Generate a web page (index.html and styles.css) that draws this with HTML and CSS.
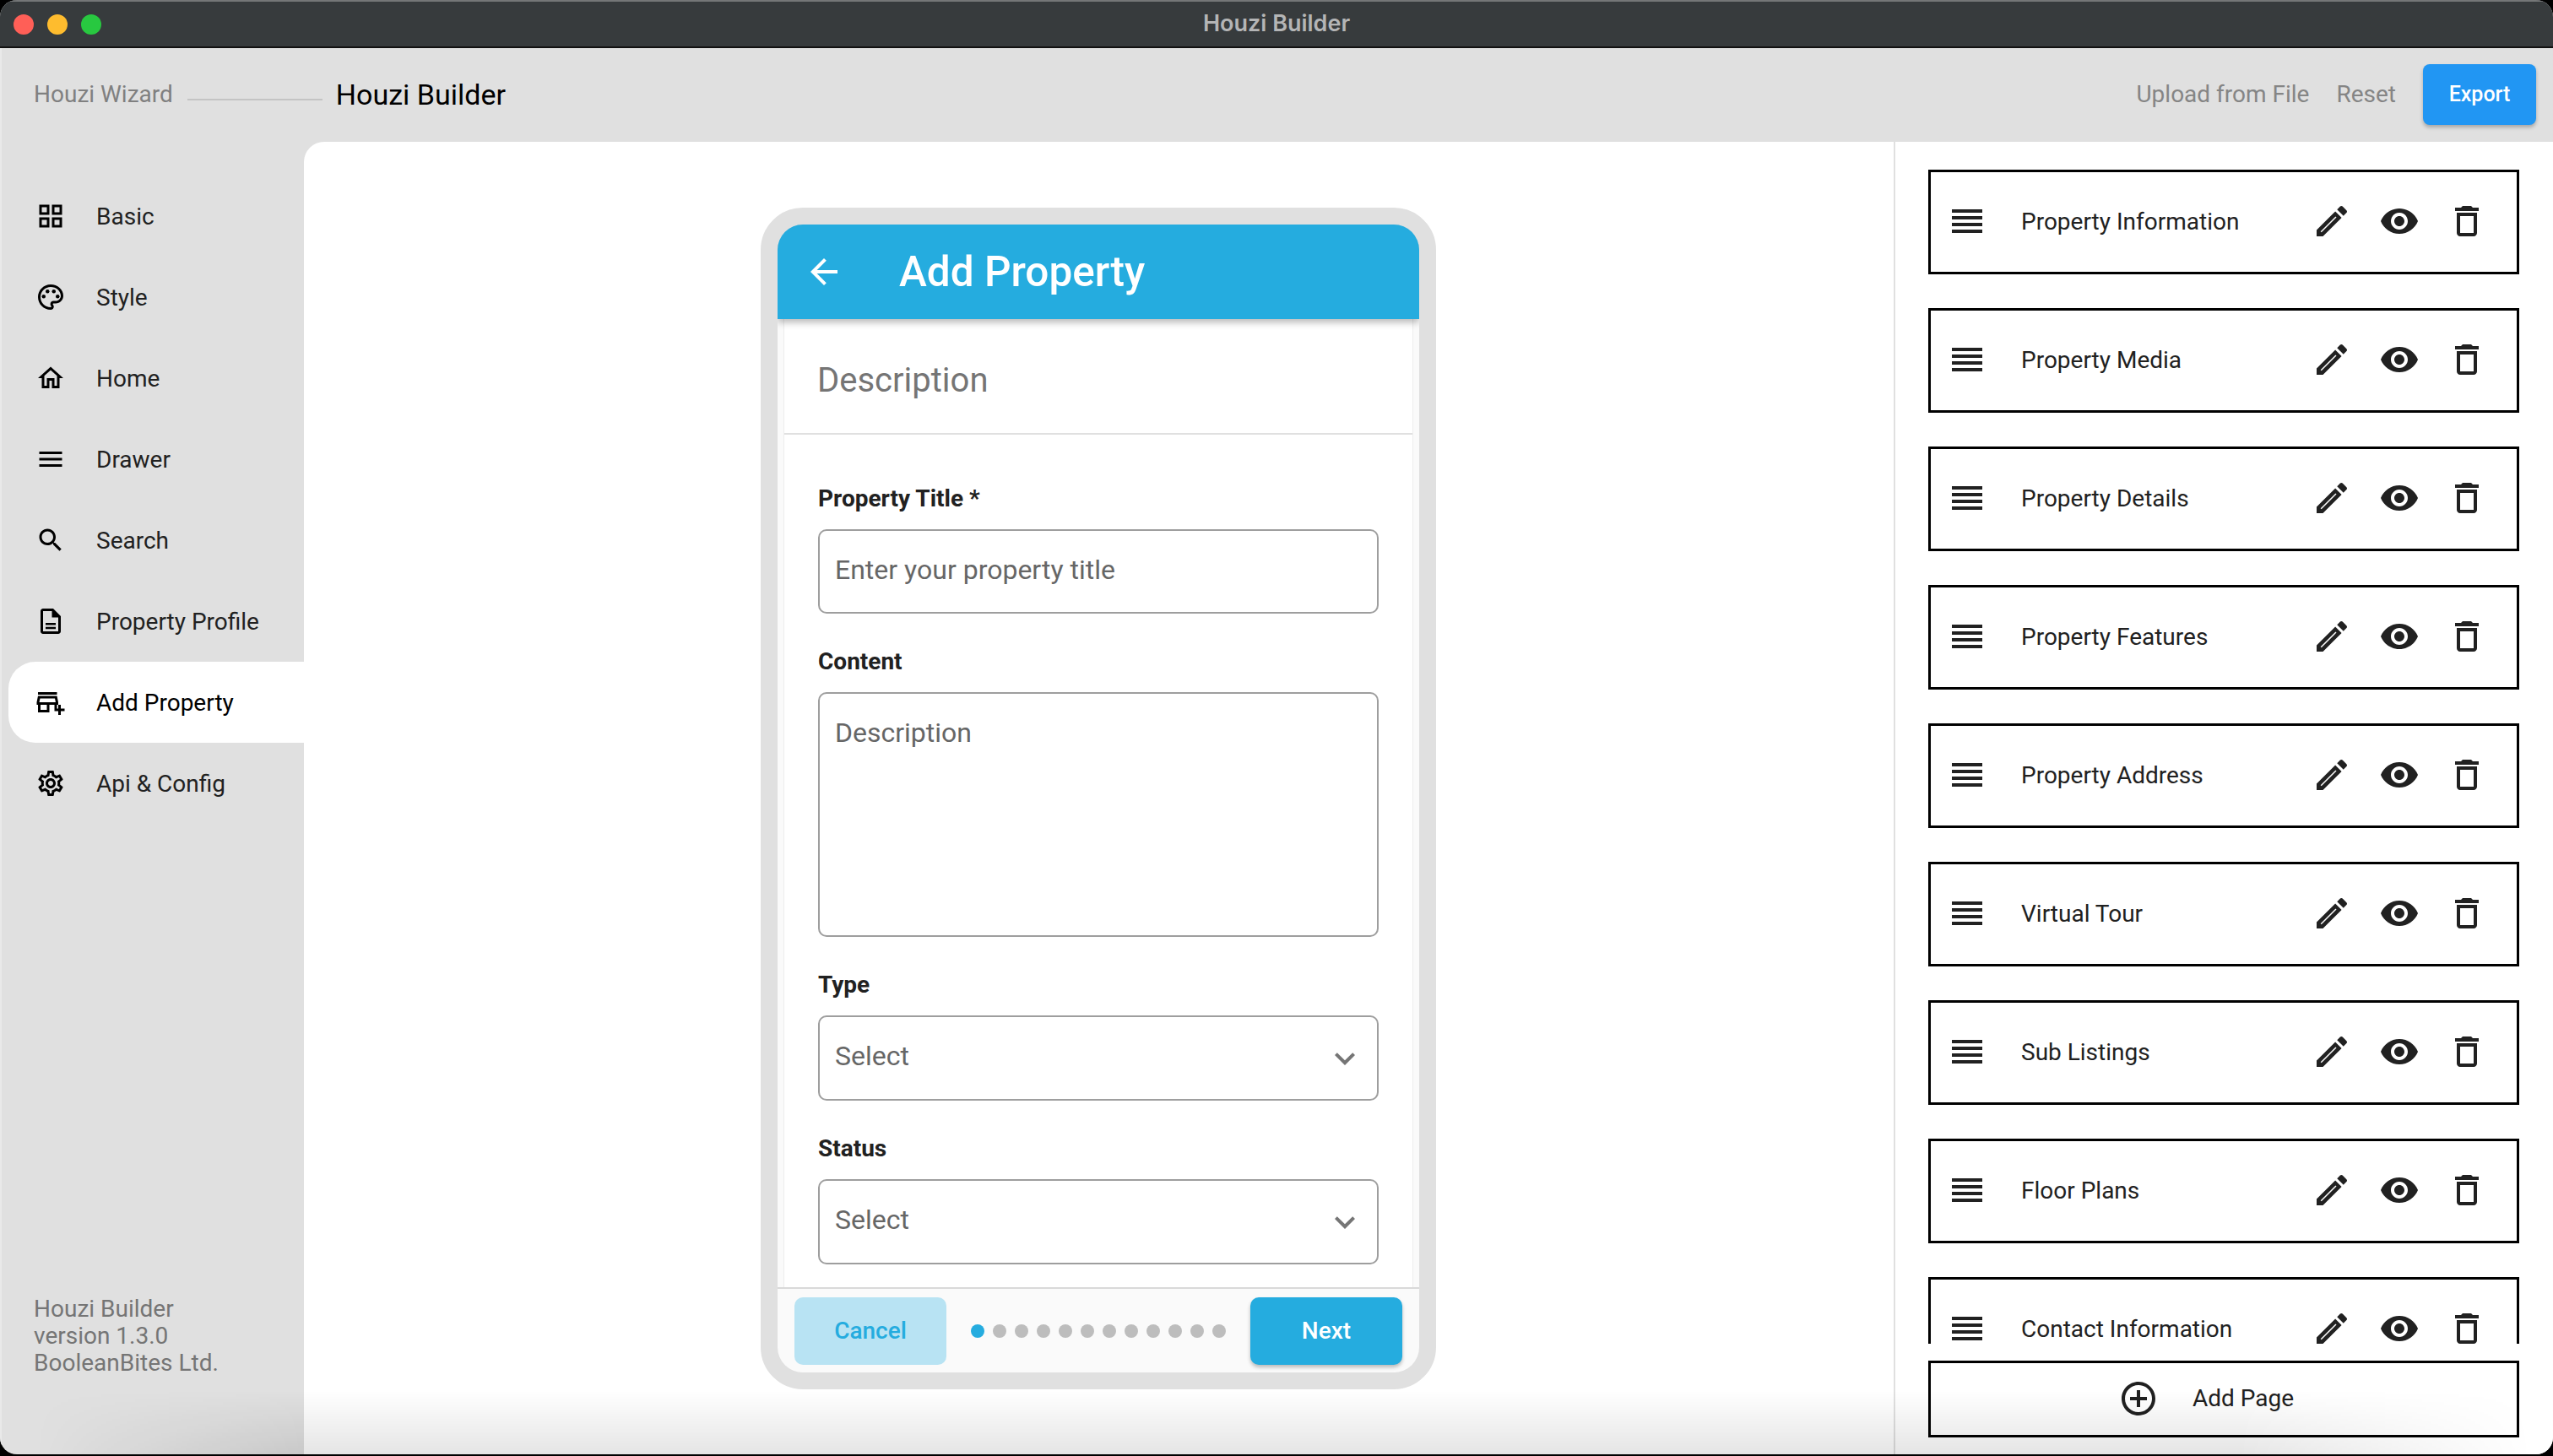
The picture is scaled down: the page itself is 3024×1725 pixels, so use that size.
FILE: index.html

```html
<!DOCTYPE html>
<html lang="en">
<head>
  <meta charset="UTF-8" />
  <title>Houzi Builder</title>
  <link rel="stylesheet" href="styles.css">
</head>
<body>
  <svg class="defs" width="0" height="0">
    <symbol id="i-grid" viewBox="0 0 24 24"><path d="M3 3v8h8V3H3zm6 6H5V5h4v4zm-6 4v8h8v-8H3zm6 6H5v-4h4v4zm4-16v8h8V3h-8zm6 6h-4V5h4v4zm-6 4v8h8v-8h-8zm6 6h-4v-4h4v4z"/></symbol>
    <symbol id="i-palette" viewBox="0 0 24 24"><path d="M12 22C6.49 22 2 17.51 2 12S6.49 2 12 2s10 4.04 10 9c0 3.31-2.69 6-6 6h-1.77c-.28 0-.5.22-.5.5 0 .12.05.23.13.33.41.47.64 1.06.64 1.67 0 1.38-1.12 2.5-2.5 2.5zm0-18c-4.41 0-8 3.59-8 8s3.59 8 8 8c.28 0 .5-.22.5-.5 0-.16-.08-.28-.14-.35-.41-.46-.63-1.05-.63-1.65 0-1.38 1.12-2.5 2.5-2.5H16c2.21 0 4-1.79 4-4 0-3.86-3.59-7-8-7z"/><circle cx="6.5" cy="11.5" r="1.5"/><circle cx="9.5" cy="7.5" r="1.5"/><circle cx="14.5" cy="7.5" r="1.5"/><circle cx="17.5" cy="11.5" r="1.5"/></symbol>
    <symbol id="i-home" viewBox="0 0 24 24"><path d="M12 5.69l5 4.5V18h-2v-6H9v6H7v-7.81l5-4.5M12 3L2 12h3v8h6v-6h2v6h6v-8h3L12 3z"/></symbol>
    <symbol id="i-menu" viewBox="0 0 24 24"><path d="M3 18h18v-2H3v2zm0-5h18v-2H3v2zm0-7v2h18V6H3z"/></symbol>
    <symbol id="i-search" viewBox="0 0 24 24"><path d="M15.5 14h-.79l-.28-.27C15.41 12.59 16 11.11 16 9.5 16 5.91 13.09 3 9.5 3S3 5.91 3 9.5 5.91 16 9.5 16c1.61 0 3.09-.59 4.23-1.57l.27.28v.79l5 4.99L20.49 19l-4.99-5zm-6 0C7.01 14 5 11.99 5 9.5S7.01 5 9.5 5 14 7.01 14 9.5 11.99 14 9.5 14z"/></symbol>
    <symbol id="i-doc" viewBox="0 0 24 24"><path d="M8 13.3h8v1.7H8zm0 3.2h8v1.7H8zM14 2H6c-1.1 0-2 .9-2 2v16c0 1.1.89 2 1.99 2H18c1.1 0 2-.9 2-2V8l-6-6zm4 18H6V4h7v5h5v11z"/></symbol>
    <symbol id="i-store" viewBox="0 0 24 24"><path d="M2 4h15v2H2zM15 17h2v-3h1v-2l-1-5H2l-1 5v2h1v6h9v-6h4v3zm-6 1H4v-4h5v4zm-5.96-6l.6-3h11.72l.6 3H3.04zM20 17v-3h-2v3h-3v2h3v3h2v-3h3v-2z"/></symbol>
    <symbol id="i-gear" viewBox="0 0 24 24"><path d="M19.43 12.98c.04-.32.07-.64.07-.98 0-.34-.03-.66-.07-.98l2.11-1.65c.19-.15.24-.42.12-.64l-2-3.46c-.09-.16-.26-.25-.44-.25-.06 0-.12.01-.17.03l-2.49 1c-.52-.4-1.08-.73-1.69-.98l-.38-2.65C14.46 2.18 14.25 2 14 2h-4c-.25 0-.46.18-.49.42l-.38 2.65c-.61.25-1.17.59-1.69.98l-2.49-1c-.06-.02-.12-.03-.18-.03-.17 0-.34.09-.43.25l-2 3.46c-.13.22-.07.49.12.64l2.11 1.65c-.04.32-.07.65-.07.98 0 .33.03.66.07.98l-2.11 1.65c-.19.15-.24.42-.12.64l2 3.46c.09.16.26.25.44.25.06 0 .12-.01.17-.03l2.49-1c.52.4 1.08.73 1.69.98l.38 2.65c.03.24.24.42.49.42h4c.25 0 .46-.18.49-.42l.38-2.65c.61-.25 1.17-.59 1.69-.98l2.49 1c.06.02.12.03.18.03.17 0 .34-.09.43-.25l2-3.46c.12-.22.07-.49-.12-.64l-2.11-1.65zm-1.98-1.71c.04.31.05.52.05.73 0 .21-.02.43-.05.73l-.14 1.13.89.7 1.08.84-.7 1.21-1.27-.51-1.04-.42-.9.68c-.43.32-.84.56-1.25.73l-1.06.43-.16 1.13-.2 1.35h-1.4l-.19-1.35-.16-1.13-1.06-.43c-.43-.18-.83-.41-1.23-.71l-.91-.7-1.06.43-1.27.51-.7-1.21 1.08-.84.89-.7-.14-1.13c-.03-.31-.05-.54-.05-.74s.02-.43.05-.73l.14-1.13-.89-.7-1.08-.84.7-1.21 1.27.51 1.04.42.9-.68c.43-.32.84-.56 1.25-.73l1.06-.43.16-1.13.2-1.35h1.39l.19 1.35.16 1.13 1.06.43c.43.18.83.41 1.23.71l.91.7 1.06-.43 1.27-.51.7 1.21-1.07.85-.89.7.14 1.13zM12 8c-2.21 0-4 1.79-4 4s1.79 4 4 4 4-1.79 4-4-1.79-4-4-4zm0 6c-1.1 0-2-.9-2-2s.9-2 2-2 2 .9 2 2-.9 2-2 2z"/></symbol>
    <symbol id="i-back" viewBox="0 0 24 24"><path d="M20 11H7.83l5.59-5.59L12 4l-8 8 8 8 1.41-1.41L7.83 13H20v-2z"/></symbol>
    <symbol id="i-chevron" viewBox="0 0 24 24"><path d="M16.59 8.59L12 13.17 7.41 8.59 6 10l6 6 6-6z"/></symbol>
    <symbol id="i-reorder" viewBox="0 0 24 24"><path d="M3 15h18v-2H3v2zm0 4h18v-2H3v2zm0-8h18V9H3v2zm0-6v2h18V5H3z"/></symbol>
    <symbol id="i-edit" viewBox="0 0 24 24"><path d="M3 17.25V21h3.75L17.81 9.94l-3.75-3.75L3 17.25zM20.71 7.04c.39-.39.39-1.02 0-1.41l-2.34-2.34c-.39-.39-1.02-.39-1.41 0l-1.83 1.83 3.75 3.75 1.83-1.83z"/><path class="slit" d="M5.6 18.4l8.9-8.9"/></symbol>
    <symbol id="i-eye" viewBox="0 0 24 24"><path d="M12 4.5C7 4.5 2.73 7.61 1 12c1.73 4.39 6 7.5 11 7.5s9.27-3.11 11-7.5c-1.73-4.39-6-7.5-11-7.5zM12 17c-2.76 0-5-2.24-5-5s2.24-5 5-5 5 2.24 5 5-2.24 5-5 5zm0-8c-1.66 0-3 1.34-3 3s1.34 3 3 3 3-1.34 3-3-1.34-3-3-3z"/></symbol>
    <symbol id="i-trash" viewBox="0 0 24 24"><path d="M16 9v10H8V9h8m-1.5-6h-5l-1 1H5v2h14V4h-3.5l-1-1zM18 7H6v12c0 1.1.9 2 2 2h8c1.1 0 2-.9 2-2V7z"/></symbol>
    <symbol id="i-add" viewBox="0 0 24 24"><path d="M13 7h-2v4H7v2h4v4h2v-4h4v-2h-4V7zm-1-5C6.48 2 2 6.48 2 12s4.48 10 10 10 10-4.48 10-10S17.52 2 12 2zm0 18c-4.41 0-8-3.59-8-8s3.59-8 8-8 8 3.59 8 8-3.59 8-8 8z"/></symbol>
  </svg>

  <div class="window">
    <div class="titlebar">
      <div class="lights">
        <span class="light red"></span>
        <span class="light yellow"></span>
        <span class="light green"></span>
      </div>
      <div class="window-title">Houzi Builder</div>
    </div>

    <header class="topbar">
      <span class="step">Houzi Wizard</span>
      <span class="step-line"></span>
      <span class="step-current">Houzi Builder</span>
      <div class="top-actions">
        <span class="top-link">Upload from File</span>
        <span class="top-link">Reset</span>
        <button class="export">Export</button>
      </div>
    </header>

    <div class="main">
      <aside class="sidebar">
        <nav class="nav">
          <div class="nav-item"><svg class="nav-icon"><use href="#i-grid"/></svg>Basic</div>
          <div class="nav-item"><svg class="nav-icon"><use href="#i-palette"/></svg>Style</div>
          <div class="nav-item"><svg class="nav-icon"><use href="#i-home"/></svg>Home</div>
          <div class="nav-item"><svg class="nav-icon"><use href="#i-menu"/></svg>Drawer</div>
          <div class="nav-item"><svg class="nav-icon"><use href="#i-search"/></svg>Search</div>
          <div class="nav-item"><svg class="nav-icon"><use href="#i-doc"/></svg>Property Profile</div>
          <div class="nav-item active"><svg class="nav-icon"><use href="#i-store"/></svg>Add Property</div>
          <div class="nav-item"><svg class="nav-icon"><use href="#i-gear"/></svg>Api &amp; Config</div>
        </nav>
        <div class="version">Houzi Builder<br>version 1.3.0<br>BooleanBites Ltd.</div>
      </aside>

      <section class="preview">
        <div class="phone">
          <div class="appbar">
            <svg class="back"><use href="#i-back"/></svg>
            <span class="appbar-title">Add Property</span>
          </div>
          <div class="phone-body">
            <div class="phone-page">
              <div class="page-heading">Description</div>
              <div class="form">
                <div class="field">
                  <div class="field-label">Property Title *</div>
                  <div class="input">Enter your property title</div>
                </div>
                <div class="field">
                  <div class="field-label">Content</div>
                  <div class="input textarea">Description</div>
                </div>
                <div class="field">
                  <div class="field-label">Type</div>
                  <div class="input select">Select<svg class="chevron"><use href="#i-chevron"/></svg></div>
                </div>
                <div class="field">
                  <div class="field-label">Status</div>
                  <div class="input select">Select<svg class="chevron"><use href="#i-chevron"/></svg></div>
                </div>
              </div>
            </div>
          </div>
          <div class="phone-footer">
            <button class="btn cancel">Cancel</button>
            <div class="dots">
              <span class="dot on"></span><span class="dot"></span><span class="dot"></span><span class="dot"></span>
              <span class="dot"></span><span class="dot"></span><span class="dot"></span><span class="dot"></span>
              <span class="dot"></span><span class="dot"></span><span class="dot"></span><span class="dot"></span>
            </div>
            <button class="btn next">Next</button>
          </div>
        </div>
      </section>

      <aside class="pages">
        <div class="page-list">
          <div class="page-card"><svg class="tool grip"><use href="#i-reorder"/></svg><span class="page-name">Property Information</span><svg class="tool"><use href="#i-edit"/></svg><svg class="tool"><use href="#i-eye"/></svg><svg class="tool"><use href="#i-trash"/></svg></div>
          <div class="page-card"><svg class="tool grip"><use href="#i-reorder"/></svg><span class="page-name">Property Media</span><svg class="tool"><use href="#i-edit"/></svg><svg class="tool"><use href="#i-eye"/></svg><svg class="tool"><use href="#i-trash"/></svg></div>
          <div class="page-card"><svg class="tool grip"><use href="#i-reorder"/></svg><span class="page-name">Property Details</span><svg class="tool"><use href="#i-edit"/></svg><svg class="tool"><use href="#i-eye"/></svg><svg class="tool"><use href="#i-trash"/></svg></div>
          <div class="page-card"><svg class="tool grip"><use href="#i-reorder"/></svg><span class="page-name">Property Features</span><svg class="tool"><use href="#i-edit"/></svg><svg class="tool"><use href="#i-eye"/></svg><svg class="tool"><use href="#i-trash"/></svg></div>
          <div class="page-card"><svg class="tool grip"><use href="#i-reorder"/></svg><span class="page-name">Property Address</span><svg class="tool"><use href="#i-edit"/></svg><svg class="tool"><use href="#i-eye"/></svg><svg class="tool"><use href="#i-trash"/></svg></div>
          <div class="page-card"><svg class="tool grip"><use href="#i-reorder"/></svg><span class="page-name">Virtual Tour</span><svg class="tool"><use href="#i-edit"/></svg><svg class="tool"><use href="#i-eye"/></svg><svg class="tool"><use href="#i-trash"/></svg></div>
          <div class="page-card"><svg class="tool grip"><use href="#i-reorder"/></svg><span class="page-name">Sub Listings</span><svg class="tool"><use href="#i-edit"/></svg><svg class="tool"><use href="#i-eye"/></svg><svg class="tool"><use href="#i-trash"/></svg></div>
          <div class="page-card"><svg class="tool grip"><use href="#i-reorder"/></svg><span class="page-name">Floor Plans</span><svg class="tool"><use href="#i-edit"/></svg><svg class="tool"><use href="#i-eye"/></svg><svg class="tool"><use href="#i-trash"/></svg></div>
          <div class="page-card"><svg class="tool grip"><use href="#i-reorder"/></svg><span class="page-name">Contact Information</span><svg class="tool"><use href="#i-edit"/></svg><svg class="tool"><use href="#i-eye"/></svg><svg class="tool"><use href="#i-trash"/></svg></div>
        </div>
        <div class="add-page"><svg class="tool"><use href="#i-add"/></svg><span>Add Page</span></div>
      </aside>
    </div>

    <div class="bottom-shade"></div>
  </div>
</body>
</html>
```

FILE: styles.css

```css
* {
  box-sizing: border-box;
}
html, body {
  margin: 0;
  height: 100%;
  background: #000;
}
body {
  font-family: Roboto, "Liberation Sans", sans-serif;
  overflow: hidden;
}
.defs {
  display: block;
  height: 0;
}
.slit {
  fill: none;
  stroke: #fff;
  stroke-width: 0.75;
}

.window {
  position: relative;
  display: flex;
  flex-direction: column;
  height: 1723px;
  background: #e0e0e0;
  border-radius: 20px;
  overflow: hidden;
}

/* mac title bar */
.titlebar {
  display: grid;
  grid-template-columns: 1fr auto 1fr;
  align-items: center;
  height: 57px;
  background: #373b3d;
  border-top: 2px solid #747677;
  border-bottom: 2px solid #111;
}
.lights {
  display: flex;
  gap: 16px;
  padding-left: 16px;
}
.light {
  width: 24px;
  height: 24px;
  border-radius: 50%;
}
.red { background: #ff5f57; }
.yellow { background: #febc2e; }
.green { background: #28c840; }
.window-title {
  margin-bottom: 2px;
  font-family: Inter, sans-serif;
  font-weight: 600;
  font-size: 27px;
  color: #b4b5b6;
}

/* top bar */
.topbar {
  display: flex;
  align-items: center;
  height: 111px;
  padding: 0 20px 2px 40px;
  box-shadow: inset 2px 0 0 #e9e9e9;
}
.step {
  font-size: 28px;
  color: #808080;
}
.step-line {
  width: 160px;
  height: 2px;
  margin: 12px 16px 0 17px;
  background: #c4c4c4;
}
.step-current {
  font-size: 34px;
  color: #000;
}
.top-actions {
  display: flex;
  align-items: center;
  margin-left: auto;
}
.top-link {
  margin-right: 32px;
  font-size: 28px;
  color: #858585;
}
.export {
  width: 134px;
  height: 72px;
  border: 0;
  border-radius: 8px;
  background: #2196f3;
  color: #fff;
  font-family: inherit;
  font-size: 25px;
  font-weight: 500;
  box-shadow: 0 3px 4px rgba(0, 0, 0, 0.25);
}

.main {
  display: flex;
  flex: 1;
  min-height: 0;
}

/* left nav */
.sidebar {
  display: flex;
  flex-direction: column;
  flex: 0 0 360px;
  box-shadow: inset 2px 0 0 #e9e9e9;
}
.nav {
  padding: 40px 0 0 10px;
}
.nav-item {
  display: flex;
  align-items: center;
  gap: 36px;
  height: 96px;
  padding-left: 32px;
  font-size: 28px;
  color: #212121;
  border-radius: 32px 0 0 32px;
}
.nav-item.active {
  background: #fff;
  color: #000;
}
.nav-icon {
  flex: none;
  width: 36px;
  height: 36px;
}
.version {
  margin-top: auto;
  padding: 0 0 92px 40px;
  font-size: 28px;
  line-height: 32px;
  color: #757575;
}

/* phone preview */
.preview {
  display: flex;
  justify-content: center;
  flex: 1;
  padding: 78px 1px 0 0;
  background: #fff;
  border-radius: 24px 0 0 0;
}
.phone {
  display: flex;
  flex-direction: column;
  width: 800px;
  height: 1400px;
  border: 20px solid #e0e0e0;
  border-radius: 50px;
  overflow: hidden;
  background: #e0e0e0;
}
.appbar {
  position: relative;
  z-index: 1;
  display: flex;
  align-items: center;
  flex: 0 0 112px;
  padding-left: 31px;
  background: #25acdf;
  border-radius: 24px 24px 0 0;
  box-shadow: 0 4px 8px rgba(0, 0, 0, 0.28);
}
.back {
  width: 48px;
  height: 48px;
  fill: #fff;
}
.appbar-title {
  margin-left: 65px;
  font-size: 49.5px;
  font-weight: 500;
  color: #fff;
}
.phone-body {
  flex: 1;
  min-height: 0;
  padding: 0 7px;
  background: #fafafa;
  overflow: hidden;
}
.phone-page {
  height: 100%;
  background: #fff;
  border-left: 1px solid #eee;
  border-right: 1px solid #eee;
}
.page-heading {
  height: 137px;
  padding: 50px 0 0 39px;
  font-size: 40px;
  line-height: 46px;
  color: #757575;
  border-bottom: 2px solid #e0e0e0;
}
.form {
  padding: 57px 40px 0 40px;
}
.field {
  margin-bottom: 38px;
}
.field-label {
  height: 36px;
  margin-bottom: 19px;
  font-size: 28px;
  font-weight: 700;
  line-height: 38px;
  color: #212121;
}
.input {
  position: relative;
  height: 100px;
  padding: 26px 18px 0 18px;
  font-size: 32px;
  line-height: 40px;
  color: #666;
  border: 2px solid #9e9e9e;
  border-radius: 10px;
}
.textarea {
  height: 290px;
}
.select {
  height: 101px;
}
.chevron {
  position: absolute;
  top: 25px;
  right: 14px;
  width: 48px;
  height: 48px;
  fill: #757575;
}
.phone-footer {
  display: flex;
  align-items: center;
  justify-content: space-between;
  flex: 0 0 101px;
  padding: 0 20px;
  background: #fafafa;
  border-top: 2px solid #d9d9d9;
  border-radius: 0 0 24px 24px;
}
.btn {
  width: 180px;
  height: 80px;
  border: 0;
  border-radius: 10px;
  font-family: inherit;
  font-size: 28px;
  font-weight: 500;
}
.cancel {
  background: #b8e3f3;
  color: #25acdf;
}
.next {
  background: #25acdf;
  color: #fff;
  box-shadow: 0 3px 4px rgba(0, 0, 0, 0.25);
}
.dots {
  display: flex;
  gap: 10px;
}
.dot {
  width: 16px;
  height: 16px;
  border-radius: 50%;
  background: #bdbdbd;
}
.dot.on {
  background: #25acdf;
}

/* page list */
.pages {
  display: flex;
  flex-direction: column;
  flex: 0 0 781px;
  padding: 0 40px 20px 39px;
  background: #fff;
  border-left: 2px solid #e0e0e0;
}
.page-list {
  display: flex;
  flex-direction: column;
  gap: 40px;
  flex: 1;
  min-height: 0;
  padding-top: 33px;
  overflow: hidden;
}
.page-card {
  display: flex;
  align-items: center;
  gap: 32px;
  flex: 0 0 124px;
  padding: 0 35px 2px 19px;
  border: 3px solid #000;
}
.page-name {
  flex: 1;
  margin-left: 8px;
  font-size: 28px;
  color: #212121;
}
.tool {
  flex: none;
  width: 48px;
  height: 48px;
  fill: #212121;
}
.add-page {
  display: flex;
  align-items: center;
  justify-content: center;
  gap: 40px;
  flex: 0 0 91px;
  margin-top: 20px;
  padding: 0 42px 2px 0;
  font-size: 28px;
  color: #212121;
  border: 3px solid #000;
}

/* soft shadow along the bottom edge */
.bottom-shade {
  position: absolute;
  left: 0;
  right: 0;
  bottom: 0;
  height: 75px;
  background: linear-gradient(to bottom, rgba(0, 0, 0, 0), rgba(0, 0, 0, 0.1));
  -webkit-mask-image: linear-gradient(to right, transparent 40px, #000 360px, #000 2650px, transparent 3000px);
  mask-image: linear-gradient(to right, transparent 40px, #000 360px, #000 2650px, transparent 3000px);
  pointer-events: none;
}
```
